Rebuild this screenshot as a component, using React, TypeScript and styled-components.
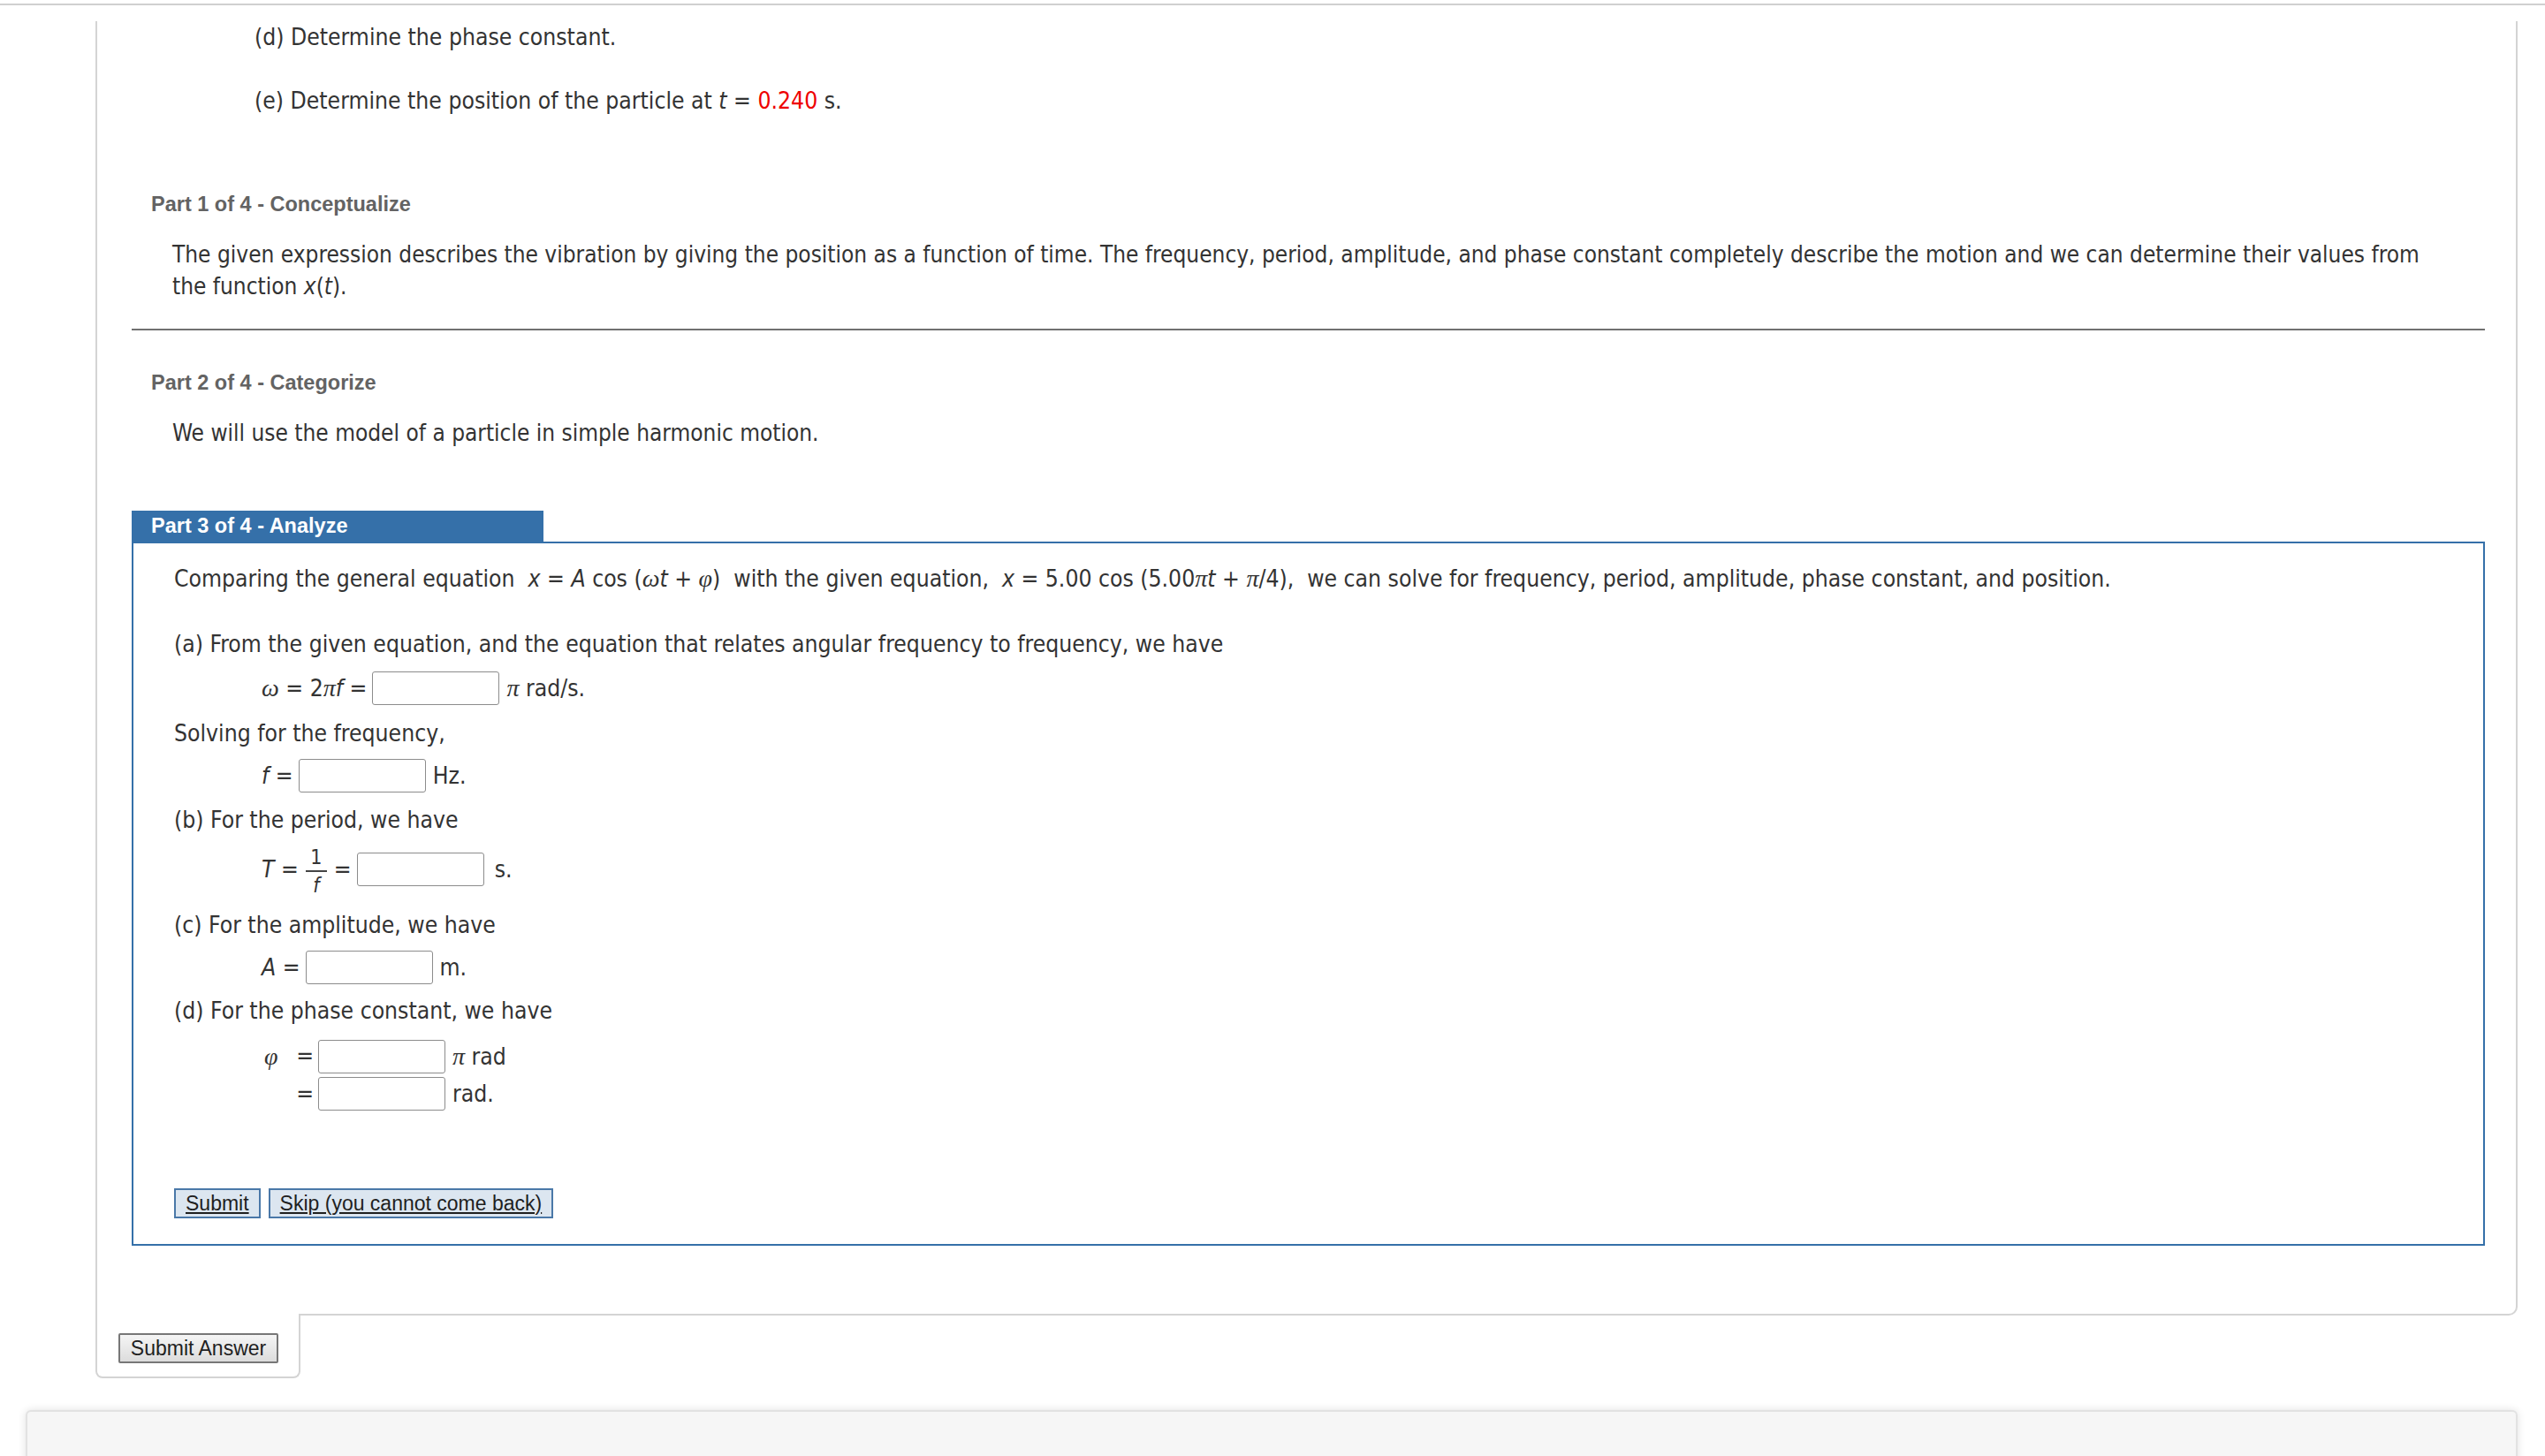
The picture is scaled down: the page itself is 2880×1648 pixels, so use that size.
import React from "react";
import styled, { createGlobalStyle } from "styled-components";

const GlobalStyle = createGlobalStyle`
  body {
    margin: 0;
    background: #fff;
  }
`;

const Page = styled.div`
  font-family: "DejaVu Sans Condensed", "DejaVu Sans", sans-serif;
  font-size: 26.3px;
  color: #333;
  padding-top: 4px;
  height: 1644px;
  overflow: hidden;
`;

const TopRule = styled.div`
  height: 2px;
  background: #d0d0d0;
`;

const Panel = styled.div`
  margin-left: 108px;
  width: 2741px;
  box-sizing: border-box;
  border: 2px solid #d4d4d4;
  border-top: none;
  border-bottom-right-radius: 10px;
  padding-bottom: 77px;
`;

const Question = styled.p<{ $top: number }>`
  margin: ${(p) => p.$top}px 0 0 178px;
  line-height: 36px;
`;

const Red = styled.span`
  color: #ee0000;
`;

const Var = styled.i`
  font-style: italic;
`;

const Greek = styled.i`
  font-family: "Liberation Serif", "DejaVu Serif", serif;
  font-style: italic;
  font-size: 28px;
`;

const Section = styled.div`
  margin: 0 35px 0 39px;
`;

const PartHeading = styled.h3<{ $top: number }>`
  margin: ${(p) => p.$top}px 0 0;
  padding-left: 22px;
  font: bold 23.5px/30px "Liberation Sans", Arial, sans-serif;
  color: #636363;
`;

const SectionText = styled.p<{ $top: number }>`
  margin: ${(p) => p.$top}px 0 0;
  padding: 0 30px 0 46px;
  font-size: 26px;
  line-height: 36px;
`;

const Rule = styled.hr`
  margin: 30px 0 0;
  border: none;
  height: 2px;
  background: #707070;
`;

const ActiveTab = styled.div`
  margin-top: 70px;
  width: 466px;
  height: 35px;
  box-sizing: border-box;
  padding-left: 22px;
  background: #3570a9;
  color: #fff;
  font: bold 23.5px/35px "Liberation Sans", Arial, sans-serif;
`;

const ActiveBox = styled.div`
  border: 2px solid #3570a9;
  padding: 22px 46px 29px;
`;

const Line = styled.p<{ $top: number }>`
  margin: ${(p) => p.$top}px 0 0;
  line-height: 36px;
`;

const Math = styled.span`
  margin: 0 15px;
`;

const EqRow = styled.div<{ $top: number; $height?: number }>`
  display: flex;
  align-items: center;
  margin-top: ${(p) => p.$top}px;
  height: ${(p) => p.$height ?? 38}px;
  padding-left: 99px;
  white-space: pre;
`;

const Label = styled.span`
  margin-right: 6px;
`;

const PhiLabel = styled.span`
  display: flex;
  justify-content: space-between;
  width: 56px;
  margin-left: 3px;
  margin-right: 5px;
`;

const Unit = styled.span<{ $gap?: number }>`
  margin-left: ${(p) => p.$gap ?? 8}px;
`;

const AnswerInput = styled.input`
  width: 144px;
  height: 38px;
  box-sizing: border-box;
  border: 1.5px solid #8c8c8c;
  border-radius: 3px;
  background: #fff;
  font: inherit;
`;

const Fraction = styled.span`
  display: inline-flex;
  flex-direction: column;
  align-items: center;
  margin: 4px 8px 0;
  font-size: 23px;
  line-height: 30px;
`;

const FracBar = styled.span`
  width: 24px;
  border-top: 2px solid #444;
`;

const ButtonRow = styled.div`
  display: flex;
  gap: 9px;
  margin-top: 88px;
`;

const PartButton = styled.button`
  height: 34px;
  padding: 0 11px;
  background: #dce6f0;
  border: 2px solid #4a78a8;
  border-radius: 0;
  color: #1f1f1f;
  font: 23px "Liberation Sans", Arial, sans-serif;
  text-decoration: underline;
  cursor: pointer;
`;

const AnswerTab = styled.div`
  margin: -2px 0 0 108px;
  width: 232px;
  height: 73px;
  box-sizing: border-box;
  border: 2px solid #d4d4d4;
  border-top: none;
  border-radius: 0 0 8px 8px;
  background: #fff;
  padding: 22px 0 0 24px;
`;

const SubmitAnswer = styled.button`
  width: 181px;
  height: 34px;
  padding: 0;
  border: 2px solid #777;
  border-radius: 2px;
  background: linear-gradient(#f5f5f5, #dcdcdc);
  color: #1f1f1f;
  font: 23px "Liberation Sans", Arial, sans-serif;
`;

const FooterCard = styled.div`
  margin: 36px 0 0 29px;
  width: 2820px;
  height: 120px;
  box-sizing: border-box;
  background: #f6f6f6;
  border: 2px solid #e2e2e2;
  border-radius: 6px 6px 0 0;
  box-shadow: 0 0 10px rgba(0, 0, 0, 0.12);
`;

const App: React.FC = () => {
  return (
    <Page>
      <GlobalStyle />
      <TopRule />
      <Panel>
        <Question $top={18}>(d) Determine the phase constant.</Question>
        <Question $top={36}>
          (e) Determine the position of the particle at <Var>t</Var> = <Red>0.240</Red> s.
        </Question>

        <Section>
          <PartHeading $top={84}>Part 1 of 4 - Conceptualize</PartHeading>
          <SectionText $top={24}>
            The given expression describes the vibration by giving the position as a function of time. The
            frequency, period, amplitude, and phase constant completely describe the motion and we can
            determine their values from the function <Var>x</Var>(<Var>t</Var>).
          </SectionText>
          <Rule />

          <PartHeading $top={44}>Part 2 of 4 - Categorize</PartHeading>
          <SectionText $top={24}>We will use the model of a particle in simple harmonic motion.</SectionText>

          <ActiveTab>Part 3 of 4 - Analyze</ActiveTab>
          <ActiveBox>
            <Line $top={0}>
              Comparing the general equation
              <Math>
                <Var>x</Var> = <Var>A</Var> cos (<Greek>ω</Greek><Var>t</Var> + <Greek>φ</Greek>)
              </Math>
              with the given equation,
              <Math>
                <Var>x</Var> = 5.00 cos (5.00<Greek>π</Greek><Var>t</Var> + <Greek>π</Greek>/4),
              </Math>
              we can solve for frequency, period, amplitude, phase constant, and position.
            </Line>

            <Line $top={38}>
              (a) From the given equation, and the equation that relates angular frequency to frequency, we have
            </Line>
            <EqRow $top={13}>
              <Label>
                <Greek>ω</Greek> = 2<Greek>π</Greek>
                <Var>f</Var> =
              </Label>
              <AnswerInput />
              <Unit>
                <Greek>π</Greek> rad/s.
              </Unit>
            </EqRow>

            <Line $top={14}>Solving for the frequency,</Line>
            <EqRow $top={11}>
              <Label>
                <Var>f</Var> =
              </Label>
              <AnswerInput />
              <Unit>Hz.</Unit>
            </EqRow>

            <Line $top={13}>(b) For the period, we have</Line>
            <EqRow $top={8} $height={60}>
              <Var>T</Var> =
              <Fraction>
                <span>1</span>
                <FracBar />
                <Var>f</Var>
              </Fraction>
              <Label>=</Label>
              <AnswerInput />
              <Unit $gap={12}>s.</Unit>
            </EqRow>

            <Line $top={15}>(c) For the amplitude, we have</Line>
            <EqRow $top={11}>
              <Label>
                <Var>A</Var> =
              </Label>
              <AnswerInput />
              <Unit>m.</Unit>
            </EqRow>

            <Line $top={12}>(d) For the phase constant, we have</Line>
            <EqRow $top={15}>
              <PhiLabel>
                <Greek>φ</Greek>
                <span>=</span>
              </PhiLabel>
              <AnswerInput />
              <Unit>
                <Greek>π</Greek> rad
              </Unit>
            </EqRow>
            <EqRow $top={4}>
              <PhiLabel>
                <span />
                <span>=</span>
              </PhiLabel>
              <AnswerInput />
              <Unit>rad.</Unit>
            </EqRow>

            <ButtonRow>
              <PartButton>Submit</PartButton>
              <PartButton>Skip (you cannot come back)</PartButton>
            </ButtonRow>
          </ActiveBox>
        </Section>
      </Panel>

      <AnswerTab>
        <SubmitAnswer>Submit Answer</SubmitAnswer>
      </AnswerTab>

      <FooterCard />
    </Page>
  );
};

export default App;
